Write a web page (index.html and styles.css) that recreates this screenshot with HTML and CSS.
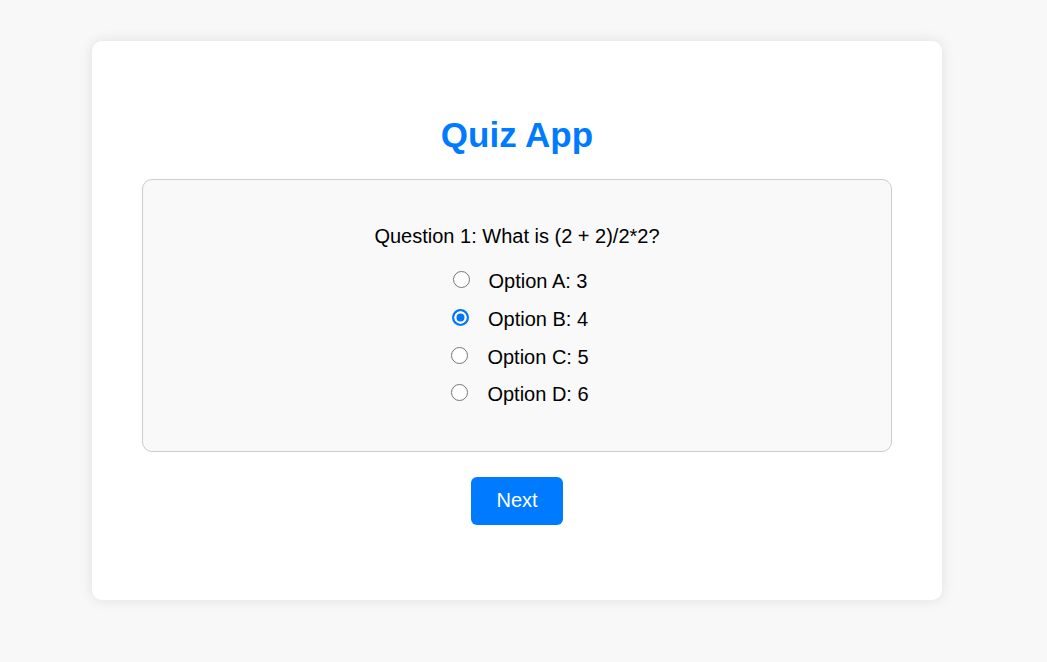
FILE: index.html
```html
<!DOCTYPE html>
<html lang="en">
<head>
<meta charset="utf-8">
<title>Quiz App</title>
<link rel="stylesheet" href="styles.css">
</head>
<body>
<div class="card">
  <h1 class="title">Quiz App</h1>
  <div class="question-box">
    <p class="question">Question 1: What is (2 + 2)/2*2?</p>
    <div class="options">
      <label class="option"><input type="radio" name="q1" class="radio"><span>Option A: 3</span></label>
      <label class="option"><input type="radio" name="q1" class="radio" checked><span>Option B: 4</span></label>
      <label class="option"><input type="radio" name="q1" class="radio"><span>Option C: 5</span></label>
      <label class="option"><input type="radio" name="q1" class="radio"><span>Option D: 6</span></label>
    </div>
  </div>
  <div class="actions">
    <button class="next-btn" type="button">Next</button>
  </div>
</div>
</body>
</html>
```

FILE: styles.css
```css
html, body {
  margin: 0;
  padding: 0;
}

body {
  background: #f8f8f8;
  font-family: "Liberation Sans", Arial, sans-serif;
  color: #000;
  padding: 41px 13px 0 0;
  min-height: 662px;
  box-sizing: border-box;
}

.card {
  width: 850px;
  box-sizing: border-box;
  margin: 0 auto;
  background: #fff;
  border-radius: 10px;
  box-shadow: 0 0 14px rgba(0, 0, 0, 0.1);
  padding: 50px 50px 50px;
}

.title {
  margin: 24px 0;
  font-size: 35px;
  line-height: 40px;
  font-weight: bold;
  color: #007bff;
  text-align: center;
}

.question-box {
  background: #f9f9f9;
  border: 1px solid #cccccc;
  border-radius: 10px;
  padding: 45px 25px 45px;
  text-align: center;
}

.question {
  margin: 0 0 22px;
  font-size: 20px;
  line-height: 23px;
}

.options {
  display: flex;
  flex-direction: column;
  align-items: center;
  gap: 14.8px;
}

.option {
  display: flex;
  align-items: center;
  font-size: 20px;
  line-height: 23px;
  height: 23px;
  cursor: pointer;
}

.radio {
  -webkit-appearance: none;
  appearance: none;
  box-sizing: border-box;
  width: 17px;
  height: 17px;
  margin: 0 19px 4px 6px;
  border: 1.5px solid #767676;
  border-radius: 50%;
  background: #fff;
  flex: none;
}

.radio:checked {
  border: 2px solid #0075ff;
  background: #0075ff;
  box-shadow: inset 0 0 0 2.5px #fff;
}

.actions {
  display: flex;
  justify-content: center;
  margin-top: 24.5px;
  margin-bottom: 25px;
}

.next-btn {
  font-family: "Liberation Sans", Arial, sans-serif;
  font-size: 20px;
  line-height: 23px;
  padding: 12.5px 25px;
  background: #007bff;
  color: #fff;
  border: none;
  border-radius: 6px;
  cursor: pointer;
}
```
